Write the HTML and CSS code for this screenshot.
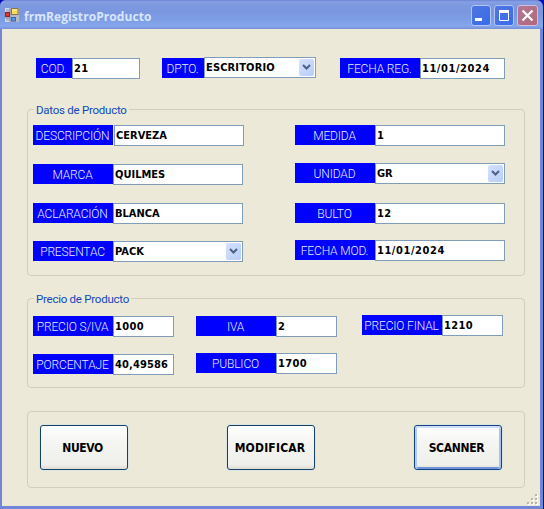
FILE: index.html
```html
<!DOCTYPE html>
<html lang="es">
<head>
<meta charset="utf-8">
<title>frmRegistroProducto</title>
<link rel="stylesheet" href="styles.css">
</head>
<body>
<div class="window">
  <header class="titlebar">
    <svg class="app-icon" width="14" height="14" viewBox="0 0 14 14"><rect width="14" height="14" fill="#b3b9c6"/><path d="M0 .5H6M.5 0V13.500H5" stroke="#d5dbea" fill="none"/><path d="M5 0v14M0 10h6" stroke="#8792ab"/><rect x=".5" y="4.500" width="4" height="4" fill="#e23528" stroke="#8c242d"/><rect x="6.500" y=".5" width="6.500" height="6" fill="#ffda55" stroke="#8b7550"/><path d="M7 2h5" stroke="#fff2a2"/><rect x="6.500" y="9.500" width="4" height="3.500" fill="#5993e7" stroke="#3867b3"/></svg>
    <h1>frmRegistroProducto</h1>
    <div class="controls">
      <svg width="20" height="21" viewBox="0 0 20 21"><rect x=".5" y=".5" width="19" height="20" rx="2.500" fill="url(#blue)" stroke="#b3c5f2"/><rect x="4" y="13" width="7" height="3" fill="#fff"/></svg>
      <svg width="20" height="21" viewBox="0 0 20 21"><rect x=".5" y=".5" width="19" height="20" rx="2.500" fill="url(#blue)" stroke="#b3c5f2"/><path d="M5.500 6v9.500h9V6" fill="none" stroke="#fff"/><rect x="5" y="5" width="10" height="3" fill="#fff"/></svg>
      <svg width="21" height="21" viewBox="0 0 21 21"><rect x=".5" y=".5" width="20" height="20" rx="2.500" fill="url(#red)" stroke="#d3bfdc"/><path d="M5.500 5.500l10 10M15.500 5.500l-10 10" stroke="#fff" stroke-width="2.200"/></svg>
      <svg width="0" height="0"><defs><linearGradient id="blue" x2="1" y2="1"><stop stop-color="#5275e0"/><stop offset="1" stop-color="#366bec"/></linearGradient><linearGradient id="red" x2="1" y2="1"><stop stop-color="#b27898"/><stop offset="1" stop-color="#b26676"/></linearGradient></defs></svg>
    </div>
  </header>
  <main class="client">
    <section class="top-row">
      <div class="field code"><label>COD.</label><div class="box number">21</div></div>
      <div class="field dept"><label>DPTO.</label><div class="box combo">ESCRITORIO<span class="arrow"><svg width="9" height="7" viewBox="0 0 9 7"><path d="M1 1l3.500 3.500L8 1" /></svg></span></div></div>
      <div class="field date"><label>FECHA REG.</label><div class="box number day">11/01/2024</div></div>
    </section>
    <section class="group product">
      <h2>Datos de Producto</h2>
      <div class="column product-left">
        <div class="field desc"><label>DESCRIPCIÓN</label><div class="box">CERVEZA</div></div>
        <div class="field"><label>MARCA</label><div class="box">QUILMES</div></div>
        <div class="field"><label>ACLARACIÓN</label><div class="box">BLANCA</div></div>
        <div class="field pres"><label>PRESENTAC</label><div class="box combo">PACK<span class="arrow"><svg width="9" height="7" viewBox="0 0 9 7"><path d="M1 1l3.500 3.500L8 1" /></svg></span></div></div>
      </div>
      <div class="column product-right">
        <div class="field"><label>MEDIDA</label><div class="box number">1</div></div>
        <div class="field unit"><label>UNIDAD</label><div class="box combo">GR<span class="arrow"><svg width="9" height="7" viewBox="0 0 9 7"><path d="M1 1l3.500 3.500L8 1" /></svg></span></div></div>
        <div class="field pack"><label>BULTO</label><div class="box number">12</div></div>
        <div class="field mod"><label>FECHA MOD.</label><div class="box number day">11/01/2024</div></div>
      </div>
    </section>
    <section class="group price">
      <h2>Precio de Producto</h2>
      <div class="column price-col">
        <div class="field"><label>PRECIO S/IVA</label><div class="box number">1000</div></div>
        <div class="field"><label>PORCENTAJE</label><div class="box number percent">40,49586</div></div>
      </div>
      <div class="column price-col">
        <div class="field"><label>IVA</label><div class="box number">2</div></div>
        <div class="field public"><label>PUBLICO</label><div class="box number">1700</div></div>
      </div>
      <div class="column price-col final">
        <div class="field"><label>PRECIO FINAL</label><div class="box number">1210</div></div>
      </div>
    </section>
    <section class="group actions">
      <button>NUEVO</button>
      <button class="modify">MODIFICAR</button>
      <button class="default">SCANNER</button>
    </section>
    <svg class="grip" width="12" height="12" viewBox="0 0 12 12"><path d="M9 1h2v2H9zM5 5h2v2H5zM9 5h2v2H9zM1 9h2v2H1zM5 9h2v2H5zM9 9h2v2H9z" fill="#fff"/><path d="M8 0h2v2H8zM4 4h2v2H4zM8 4h2v2H8zM0 8h2v2H0zM4 8h2v2H4zM8 8h2v2H8z" fill="#b8b4a2"/></svg>
  </main>
</div>
</body>
</html>
```
FILE: styles.css
```css
* { box-sizing: border-box; }
body { margin: 0; background: #0010b5; font-family: "DejaVu Sans Condensed", "DejaVu Sans", sans-serif; overflow: hidden; }
.window { width: 543px; height: 509px; padding: 0 3px 3px 2px; background: #7186d8; border-radius: 6px 7px 0 0; }
.titlebar { height: 29px; margin: 0 -3px 0 -2px; padding: 1px 4px 0 5px; display: flex; align-items: center; background: linear-gradient(#6d83d4 0, #88a0e4 2px, #7c99e0 5px, #7a96df 12px, #7d9ee4 20px, #86a7ec 26px, #758fd9 29px); border-radius: 6px 7px 0 0; }
.app-icon { display: block; }
h1 { margin: 3px 0 0 5px; font: bold 12px/20px "Open Sans", sans-serif; letter-spacing: .07px; color: #d9e5fa; white-space: nowrap; }
.controls { display: flex; gap: 3px; margin-left: auto; width: 68px; padding-top: 1px; }
.controls svg { display: block; flex: none; }
.client { position: relative; height: 477px; background: #ece9d8; padding: 28px 15px 0 25px; }
.top-row { display: flex; height: 52px; padding-left: 9px; }
.field { display: flex; align-items: flex-start; height: 21px; }
.top-row .field { margin-top: 1px; }
label { flex: none; width: 80px; height: 20px; padding-right: 1px; background: #00f; color: #e8edff; font: 300 12px/22px Roboto, sans-serif; letter-spacing: -.15px; text-align: center; white-space: nowrap; }
.box { flex: 1; min-width: 0; height: 21px; border: 1px solid #7f9db9; background: #fff; color: #000; font-weight: bold; font-size: 11px; line-height: 20px; letter-spacing: 0; padding-left: 1px; white-space: nowrap; }
.number { letter-spacing: .35px; }
.day { letter-spacing: .55px; }
.percent { letter-spacing: .15px; }
.combo { display: flex; justify-content: space-between; padding-right: 1px; }
.dept .combo { letter-spacing: .15px; }
.arrow { width: 15px; height: 17px; margin-top: 1px; border-radius: 2px; background: linear-gradient(135deg, #d5e1fd, #b9cdf8); display: flex; align-items: center; justify-content: center; }
.arrow path { fill: none; stroke: #4d6185; stroke-width: 2; }
.code { width: 104px; }
.code label { width: 36px; }
.dept { width: 154px; margin-left: 22px; }
.dept label { width: 42px; }
.dept .box { margin-top: -1px; }
.date { width: 165px; margin-left: 24px; }
.group { position: relative; width: 498px; border: 1px solid #d0cfbc; border-radius: 4px; display: flex; }
h2 { position: absolute; left: 6px; top: -8px; margin: 0; padding: 0 2px; background: #ece9d8; color: #1048b8; font: 400 11.5px/16px Roboto, sans-serif; letter-spacing: -.25px; white-space: nowrap; }
.product { height: 167px; padding: 15px 19px 0 5px; justify-content: space-between; }
.column { display: flex; flex-direction: column; }
.product .column { width: 210px; gap: 18px; }
.desc { width: 211px; }
.desc label { margin-right: 1px; }
.pres, .unit { margin-top: -1px; }
.pack { margin-top: 1px; }
.mod { margin-top: -2px; }
.price { height: 90px; margin-top: 22px; padding: 17px 0 0 5px; gap: 22px; }
.price-col { width: 141px; gap: 17px; }
.final { margin: -1px 0 0 3px; }
.public { margin-top: -1px; }
.actions { height: 77px; margin-top: 23px; padding: 13px 22px 0 12px; justify-content: space-between; }
button { width: 88px; height: 45px; padding: 0 3px 0 0; border: 1px solid #164166; border-radius: 3px; background: linear-gradient(#fff, #f4f4f1 40%, #efefeb 90%, #dedbd2); color: #000; font: bold 12px/20px "DejaVu Sans Condensed", sans-serif; letter-spacing: -.4px; box-shadow: 0 0 0 1px #dce5e4; }
.modify { letter-spacing: .2px; padding-right: 2px; }
.default { letter-spacing: -.3px; border-color: #17437a; box-shadow: 0 0 0 1px #dce5e4, inset 0 2px #cee0fb, inset 2px 0 #b3cbf3, inset -2px 0 #a7c2ee, inset 0 -2px #6f94dc; }
.grip { position: absolute; right: 1px; bottom: 0; }
```
